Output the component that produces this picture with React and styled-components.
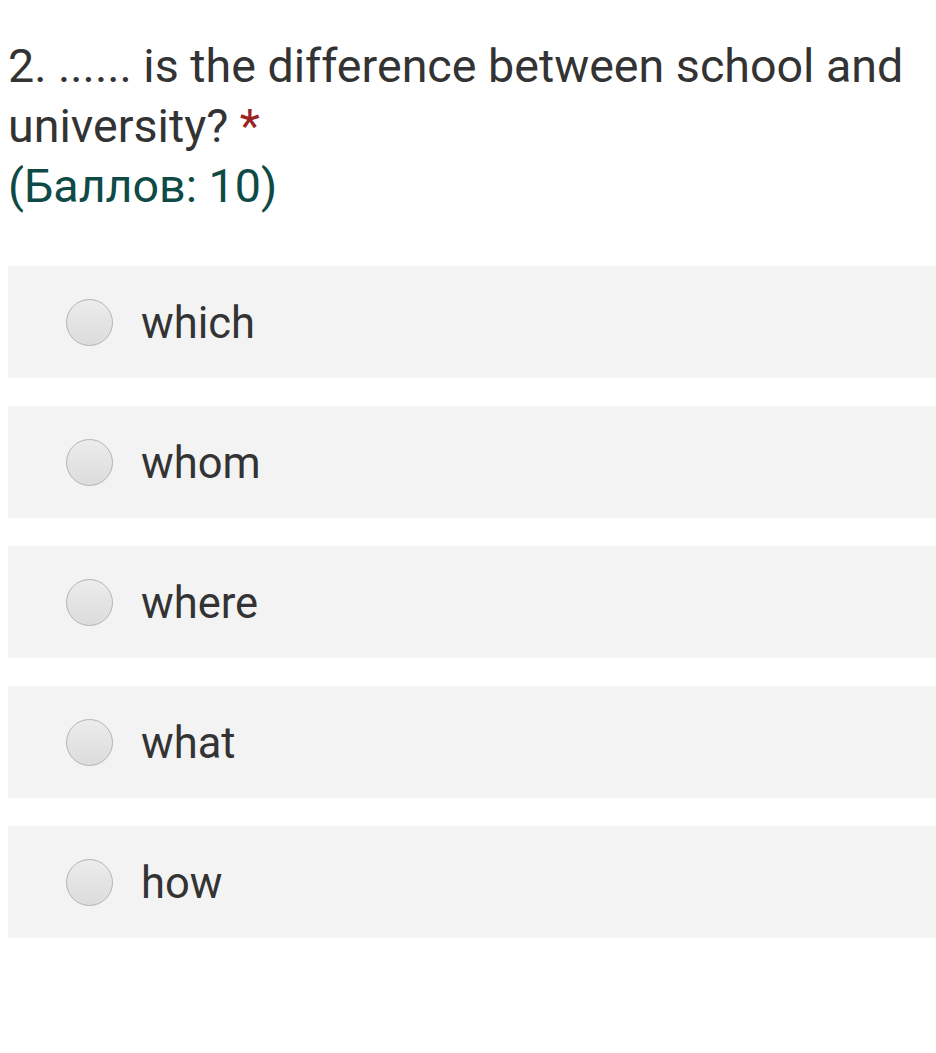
import React from 'react';
import styled, { createGlobalStyle } from 'styled-components';

const GlobalStyle = createGlobalStyle`
  html, body {
    margin: 0;
    padding: 0;
    background: #ffffff;
  }
  body {
    font-family: Roboto, "Noto Sans", "Liberation Sans", sans-serif;
  }
`;

const Page = styled.div`
  padding: 36px 0 0 8px;
`;

const Question = styled.div`
  font-size: 46.6px;
  line-height: 60px;
  color: #333333;
  padding-right: 10px;
`;

const Required = styled.span`
  color: #9b2323;
`;

const Points = styled.div`
  color: #0e4a46;
`;

const Options = styled.div`
  display: flex;
  flex-direction: column;
  gap: 28px;
  margin-top: 50px;
`;

const Option = styled.label`
  display: flex;
  align-items: center;
  gap: 28px;
  height: 112px;
  padding-left: 58px;
  background: #f3f3f3;
  cursor: pointer;
`;

const Radio = styled.span`
  width: 45px;
  height: 45px;
  border-radius: 50%;
  border: 1px solid #b4b4b4;
  background: linear-gradient(#ececec, #dcdcdc);
  flex-shrink: 0;
`;

const OptionText = styled.span`
  font-size: 43.5px;
  color: #333333;
  padding-top: 2px;
`;

const answers = ['which', 'whom', 'where', 'what', 'how'];

export default function App() {
  return (
    <>
      <GlobalStyle />
      <Page>
        <Question>
          2. ...... is the difference between school and university? <Required>*</Required>
          <Points>(Баллов: 10)</Points>
        </Question>
        <Options>
          {answers.map((a) => (
            <Option key={a}>
              <Radio />
              <OptionText>{a}</OptionText>
            </Option>
          ))}
        </Options>
      </Page>
    </>
  );
}
